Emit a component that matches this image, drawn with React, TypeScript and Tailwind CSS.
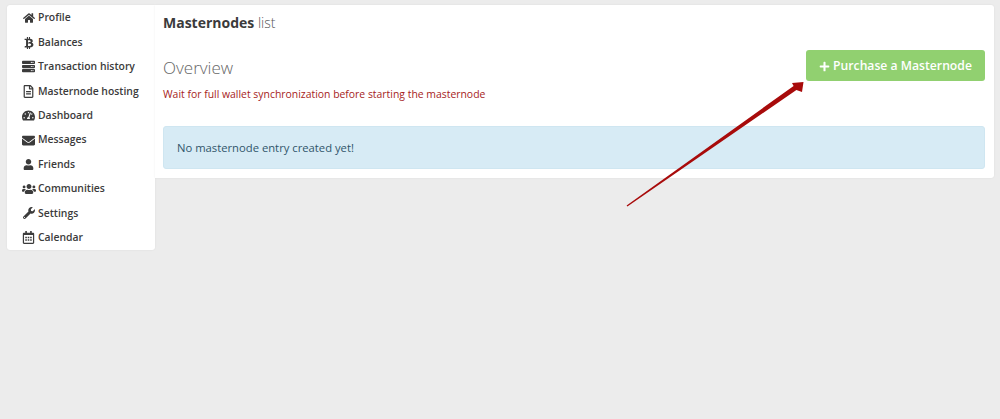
import { FaHome, FaBtc, FaServer, FaRegFileAlt, FaTachometerAlt, FaEnvelope, FaUser, FaUsers, FaWrench, FaRegCalendarAlt, FaPlus } from "react-icons/fa";

const menu = [
  { label: "Profile", icon: FaHome, size: "text-[12px]" },
  { label: "Balances", icon: FaBtc, size: "text-[12px]" },
  { label: "Transaction history", icon: FaServer, size: "text-[13px]" },
  { label: "Masternode hosting", icon: FaRegFileAlt, size: "text-[13px]" },
  { label: "Dashboard", icon: FaTachometerAlt, size: "text-[13px]" },
  { label: "Messages", icon: FaEnvelope, size: "text-[13px]" },
  { label: "Friends", icon: FaUser, size: "text-[11px]" },
  { label: "Communities", icon: FaUsers, size: "text-[14px]" },
  { label: "Settings", icon: FaWrench, size: "text-[12px]" },
  { label: "Calendar", icon: FaRegCalendarAlt, size: "text-[13px]" },
];

export default function App() {
  return (
    <div className="relative h-[419px] w-[1000px] overflow-hidden bg-[#ececec] font-['Open_Sans',sans-serif]">
      <div className="flex items-start pl-[7px] pt-[5px]">
        <nav className="flex h-[245px] w-[148px] flex-col rounded-l-[3px] rounded-br-[3px] bg-white pl-[15px] pt-[1px] shadow-[0_0_2px_rgba(0,0,0,0.08)]">
          {menu.map(({ label, icon: Icon, size }) => (
            <div key={label} className="flex h-[24.4px] items-center gap-[3px] text-[10.4px] font-semibold text-[#3b3b3b]">
              <span className="flex w-[13px] justify-center">
                <Icon className={`${size} shrink-0 text-[#3b3b3b]`} />
              </span>
              {label}
            </div>
          ))}
        </nav>
        <main className="h-[173px] w-[839px] rounded-r-[3px] bg-white pl-[8px] pr-[9px] shadow-[0_0_2px_rgba(0,0,0,0.08)]">
          <h1 className="pt-[8px] text-[14px] leading-[20px] text-[#3b3b3b]">
            <span className="font-bold">Masternodes</span> <span className="font-light text-[#555]">list</span>
          </h1>
          <div className="mt-[17px] flex h-[50px] items-start justify-between">
            <div>
              <h2 className="pt-[6px] text-[17px] leading-[24px] font-light text-[#666]">Overview</h2>
              <p className="mt-[6px] text-[10.42px] leading-[16px] text-[#a61c1c]">Wait for full wallet synchronization before starting the masternode</p>
            </div>
            <button className="flex h-[31px] w-[179px] items-center justify-center gap-[3px] rounded-[3px] bg-[#91d070] pt-[1px] text-[12.2px] font-semibold text-white">
              <FaPlus className="text-[11px]" />
              Purchase a Masternode
            </button>
          </div>
          <div className="mt-[26px] flex h-[43px] items-center rounded-[3px] border border-[#cfe6f1] bg-[#d7ebf5] pl-[13px] pt-[1px] text-[11.25px] text-[#31566b]">
            No masternode entry created yet!
          </div>
        </main>
      </div>
      <svg className="absolute inset-0" width="1000" height="419" viewBox="0 0 1000 419">
        <path d="M626.6 205.4 L793.6 86 L792 83 L803.5 82 L802 92 L796.4 90 L627.4 206.6 Z" fill="#a80b0b" />
      </svg>
    </div>
  );
}
